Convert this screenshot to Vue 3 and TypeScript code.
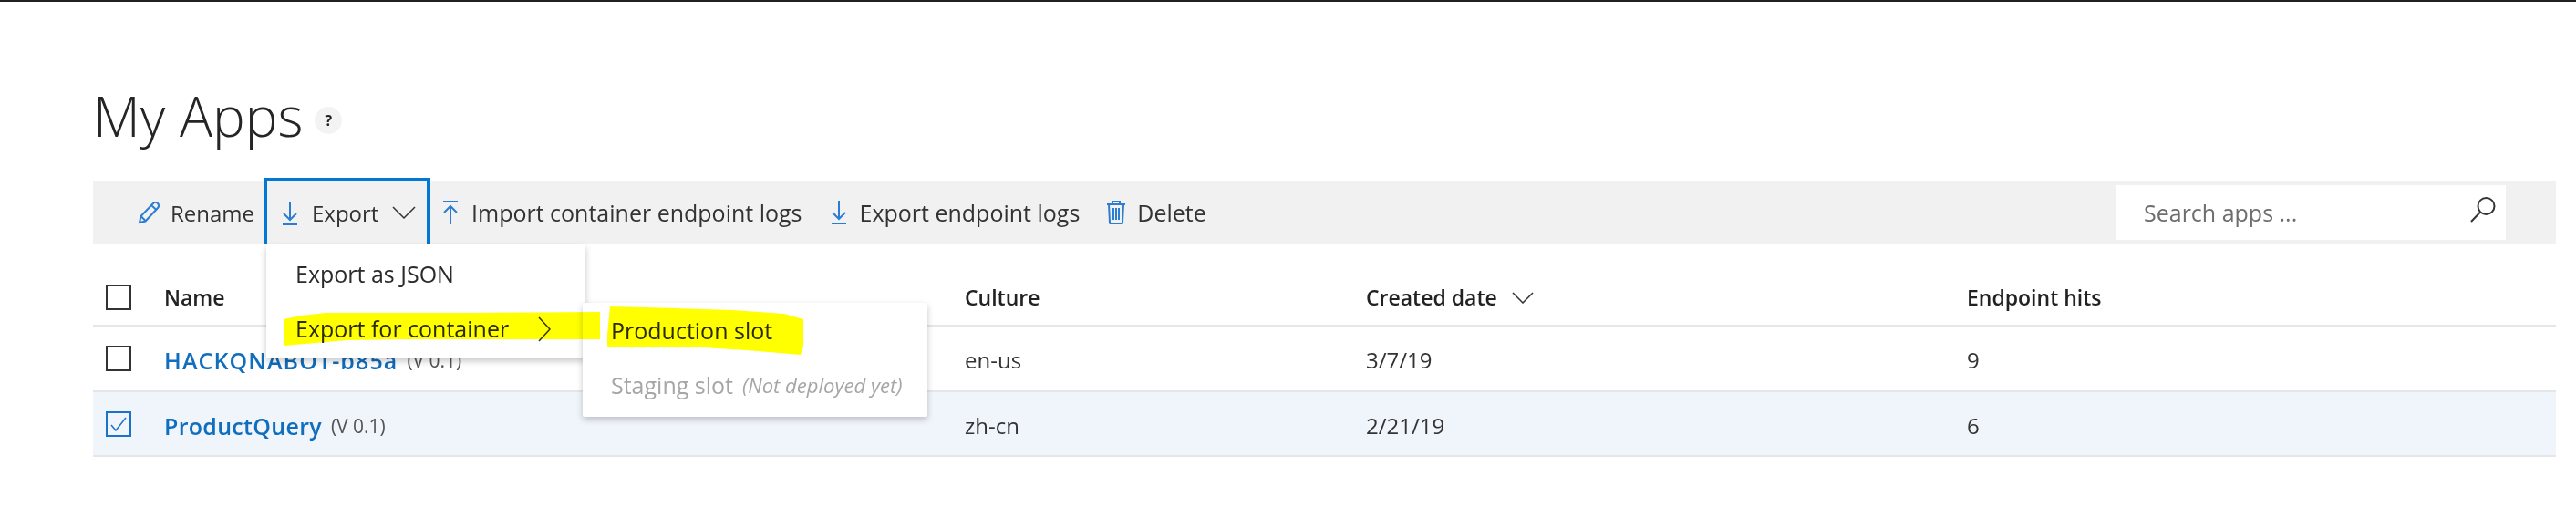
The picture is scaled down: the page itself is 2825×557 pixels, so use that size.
<template>
  <div class="page">
    <div class="title-row">
      <h1 class="title">My Apps</h1>
      <span class="help">?</span>
    </div>

    <div class="toolbar">
      <button class="tool tool--rename">
        <svg class="icon" width="26" height="26" viewBox="0 0 26 26">
          <path d="M2 24l1.5-7L17 3c1.500-1.500 3.500-1.500 5 0s1.500 3.500 0 5L8.500 22.500zM3.500 17l5.500 5.500M15 5l6 5.500" />
        </svg>
        Rename
      </button>
      <button class="tool tool--export">
        <svg class="icon" width="18" height="26" viewBox="0 0 18 26">
          <path d="M9 0v20M2 13l7 7 7-7M1 25h16" />
        </svg>
        <span>Export</span>
        <svg class="chevron" width="26" height="15" viewBox="0 0 26 15">
          <path d="M1 1l12 12L25 1" />
        </svg>
      </button>
      <button class="tool tool--import">
        <svg class="icon" width="16" height="26" viewBox="0 0 16 26">
          <path d="M0 1h16M8 26V6M1 13l7-7 7 7" />
        </svg>
        Import container endpoint logs
      </button>
      <button class="tool tool--logs">
        <svg class="icon" width="18" height="26" viewBox="0 0 18 26">
          <path d="M9 0v20M2 13l7 7 7-7M1 25h16" />
        </svg>
        Export endpoint logs
      </button>
      <button class="tool tool--delete">
        <svg class="icon" width="22" height="26" viewBox="0 0 22 26">
          <path d="M1 4h20M7 4V1h8v3M3 4l1 20c0 1 1 1.500 2 1.500h10c1 0 2-.5 2-1.500l1-20M8 8v13M11 8v13M14 8v13" />
        </svg>
        Delete
      </button>
      <label class="search">
        <input class="search__input" type="text" placeholder="Search apps ..." />
        <svg class="search__icon" width="28" height="28" viewBox="0 0 28 28">
          <circle cx="17.500" cy="10" r="9" />
          <path d="M11 16.500L1 27" />
        </svg>
      </label>
    </div>

    <div class="grid grid--head">
      <span class="checkbox" />
      <span class="cell">Name</span>
      <span class="cell">Culture</span>
      <span class="cell">
        Created date
        <svg class="sort" width="24" height="13" viewBox="0 0 24 13">
          <path d="M1 1l11 11L23 1" />
        </svg>
      </span>
      <span class="cell">Endpoint hits</span>
    </div>

    <div
      v-for="app in apps"
      :key="app.name"
      class="grid grid--row"
      :class="{ 'grid--selected': app.selected }"
    >
      <span class="checkbox" :class="{ 'checkbox--on': app.selected }">
        <svg v-if="app.selected" width="18" height="16" viewBox="0 0 18 16">
          <path d="M1 9l5 6L17 1" />
        </svg>
      </span>
      <span class="cell">
        <a class="app-link" :class="{ 'app-link--caps': !app.selected }">{{ app.name }}</a>
        <span class="version">(V 0.1)</span>
      </span>
      <span class="cell">{{ app.culture }}</span>
      <span class="cell">{{ app.created }}</span>
      <span class="cell">{{ app.hits }}</span>
    </div>

    <div class="menu menu--export">
      <div class="menu__item">Export as JSON</div>
      <div class="menu__item menu__item--sub">
        Export for container
        <svg class="menu__arrow" width="14" height="28" viewBox="0 0 14 28">
          <path d="M1 1l12 13L1 27" />
        </svg>
      </div>
    </div>

    <div class="menu menu--slots">
      <div class="menu__item">Production slot</div>
      <div class="menu__item menu__item--disabled">
        <span>Staging slot</span>
        <em class="menu__note">(Not deployed yet)</em>
      </div>
    </div>

    <svg class="marker" width="2825" height="557" viewBox="0 0 2825 557">
      <polygon points="311,350 330,346 357,343 500,343 658,342 658,372 446,372 380,373 312,379" />
      <polygon points="669,336 707,337 804,340 860,344 881,350 881,380 878,389 819,384 753,380 666,380 666,367" />
    </svg>
  </div>
</template>

<script setup lang="ts">
interface IApp {
  name: string;
  culture: string;
  created: string;
  hits: number;
  selected: boolean;
}

const apps: IApp[] = [
  { name: 'HACKQNABOT-b85a', culture: 'en-us', created: '3/7/19', hits: 9, selected: false },
  { name: 'ProductQuery', culture: 'zh-cn', created: '2/21/19', hits: 6, selected: true },
];
</script>

<style>
body {
  background: #fff;
  overflow: hidden;
}
</style>

<style scoped>
.page {
  position: relative;
  width: 2825px;
  height: 557px;
  box-sizing: border-box;
  padding: 0 22px 0 102px;
  border-top: 2px solid #222;
  overflow: hidden;
  font-family: "Open Sans", "Noto Sans", sans-serif;
  font-size: 24px;
  color: #333;
}

.title-row {
  display: flex;
  align-items: center;
  gap: 17px;
  height: 196px;
  padding-top: 54px;
  box-sizing: border-box;
}

.title {
  margin: 0;
  font-size: 60px;
  font-weight: 300;
  line-height: 80px;
  color: #252525;
}

.help {
  display: flex;
  align-items: center;
  justify-content: center;
  width: 30px;
  height: 30px;
  margin: 10px 0 0 -4px;
  border-radius: 50%;
  background: #f3f3f3;
  font-size: 16px;
  font-weight: 700;
  color: #222;
}

.toolbar {
  display: flex;
  align-items: center;
  height: 70px;
  background: #f1f1f1;
}

.tool {
  display: flex;
  align-items: center;
  padding: 0;
  border: 0;
  background: none;
  font: inherit;
  font-size: 25px;
  color: #333;
  white-space: nowrap;
}

.icon {
  fill: none;
  stroke: #2b7cd3;
  stroke-width: 2;
  flex: none;
}

.tool--rename {
  gap: 10px;
  margin-left: 49px;
  width: 138px;
  font-size: 24px;
}

.tool--export {
  position: relative;
  z-index: 2;
  gap: 15px;
  width: 183px;
  height: 73px;
  margin-top: -3px;
  padding-left: 16px;
  box-sizing: border-box;
  border: 4px solid #0078d4;
  border-bottom: 0;
  font-size: 24px;
}

.chevron {
  fill: none;
  stroke: #333;
  stroke-width: 1.500;
}

.tool--import {
  gap: 15px;
  margin-left: 14px;
}

.tool--logs {
  gap: 14px;
  margin-left: 31px;
}

.tool--delete {
  gap: 12px;
  margin-left: 29px;
}

.search {
  display: flex;
  align-items: center;
  width: 428px;
  height: 60px;
  margin-left: auto;
  margin-right: 55px;
  background: #fff;
}

.search__input {
  flex: 1;
  min-width: 0;
  padding: 0 0 0 31px;
  border: 0;
  outline: 0;
  background: none;
  font: inherit;
  font-size: 25px;
  color: #333;
}

.search__input::placeholder {
  color: #6e6e6e;
  opacity: 1;
}

.search__icon {
  flex: none;
  margin: -6px 11px 0 0;
  fill: none;
  stroke: #333;
  stroke-width: 2;
}

.grid {
  display: grid;
  grid-template-columns: 64px 878px 440px 659px 1fr;
  padding-left: 14px;
  box-sizing: border-box;
  border-bottom: 2px solid #e6e6e6;
}

.grid--head {
  height: 90px;
  padding-bottom: 16px;
  align-items: end;
  font-weight: 600;
  color: #222;
  font-size: 23px;
}

.grid--row {
  height: 72px;
  align-items: center;
}

.grid--row + .grid--row {
  height: 71px;
}

.grid--selected {
  background: #f0f4fb;
}

.cell {
  display: flex;
  align-items: center;
  line-height: 30px;
  padding-top: 4px;
  white-space: nowrap;
}

.grid--head .cell {
  padding-top: 0;
  margin-bottom: -1px;
}

.checkbox {
  display: flex;
  align-items: center;
  justify-content: center;
  width: 28px;
  height: 28px;
  box-sizing: border-box;
  border: 2px solid #333;
}

.checkbox--on {
  border-color: #1a73c8;
}

.checkbox--on svg {
  fill: none;
  stroke: #1a73c8;
  stroke-width: 1.500;
}

.sort {
  margin-left: 16px;
  fill: none;
  stroke: #333;
  stroke-width: 1.500;
}

.app-link {
  font-size: 25px;
  font-weight: 600;
  letter-spacing: 0.300px;
  color: #106ebe;
}

.app-link--caps {
  letter-spacing: 1.100px;
}

.version {
  margin-left: 10px;
  font-size: 21px;
  color: #555;
}

.menu {
  position: absolute;
  z-index: 3;
  box-sizing: border-box;
  background: #fff;
  box-shadow: 0 3px 7px rgba(0, 0, 0, 0.22);
  font-size: 25px;
  color: #2b2b2b;
}

.menu--export {
  left: 292px;
  top: 266px;
  width: 350px;
  height: 125px;
  padding: 2px 0 0 32px;
}

.menu--slots {
  left: 639px;
  top: 330px;
  width: 378px;
  height: 125px;
  border-radius: 2px;
  padding-left: 31px;
}

.menu__item {
  display: flex;
  align-items: center;
  height: 60px;
  white-space: nowrap;
}

.menu__item--sub {
  position: relative;
}

.menu__arrow {
  position: absolute;
  left: 266px;
  top: 17px;
  fill: none;
  stroke: #333;
  stroke-width: 1.500;
}

.menu__item--disabled {
  gap: 10px;
  color: #a6a6a6;
}

.menu__note {
  font-size: 22px;
}

.marker {
  position: absolute;
  left: 0;
  top: -2px;
  z-index: 4;
  fill: #ffff00;
  mix-blend-mode: multiply;
  pointer-events: none;
}
</style>
